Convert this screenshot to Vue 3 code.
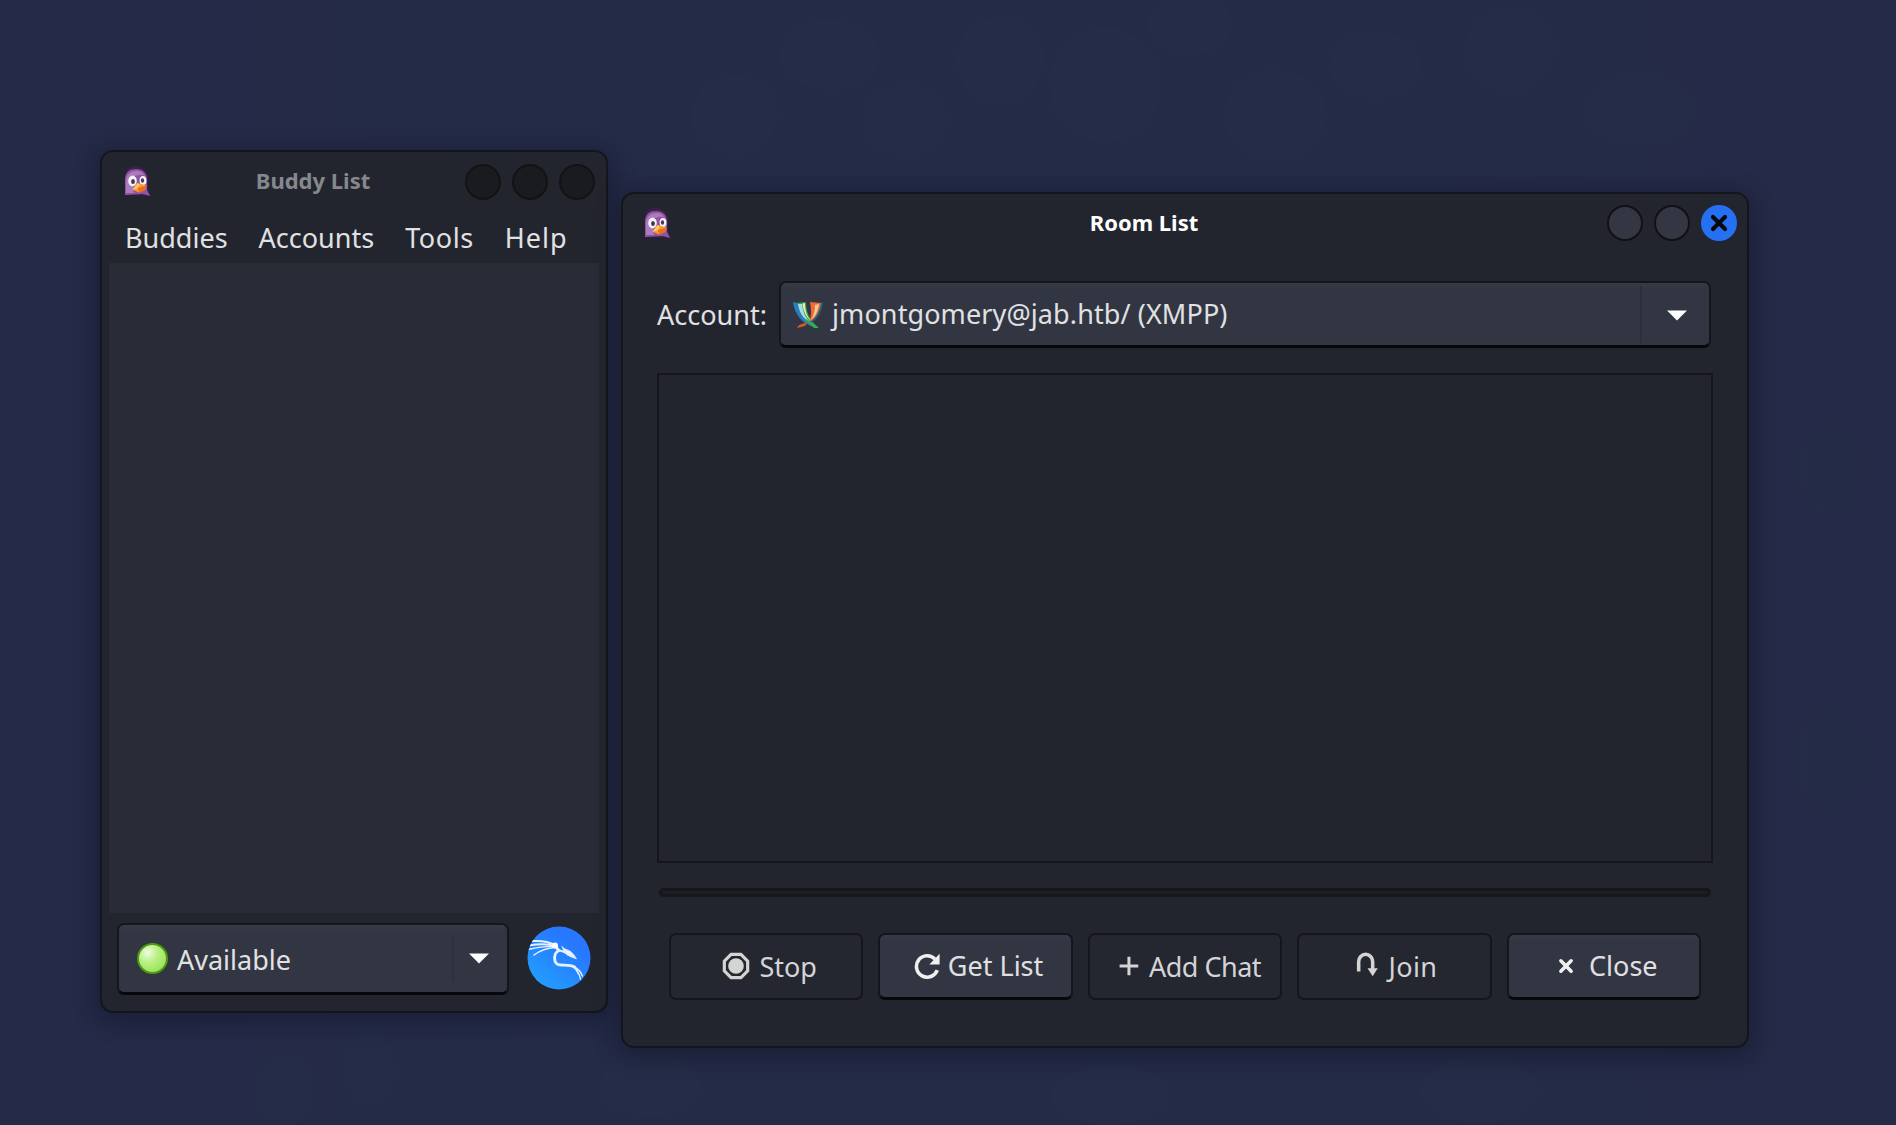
<template>
  <div class="desktop">
    <svg class="wallpaper" viewBox="0 0 1896 1125" aria-hidden="true">
      <ellipse
        v-for="(spot, index) in spots"
        :key="index"
        :cx="spot[0]"
        :cy="spot[1]"
        :rx="spot[2]"
        :ry="spot[3]"
      />
    </svg>

    <section class="window window--buddies">
      <header class="titlebar">
        <svg class="app-icon" viewBox="0 0 28 31">
          <use href="#pidgin" />
        </svg>
        <h1 class="title title--inactive">Buddy List</h1>
        <div class="controls">
          <span v-for="n in 3" :key="n" class="control control--inactive"></span>
        </div>
      </header>

      <nav class="menu">
        <span v-for="item in menu" :key="item">{{ item }}</span>
      </nav>

      <div class="buddies"></div>

      <footer class="status">
        <div class="combo combo--status">
          <span class="dot"></span>
          <span class="combo-text">{{ status }}</span>
          <span class="divider"></span>
          <svg class="arrow" viewBox="0 0 22 11"><path d="M0 0h22L11 11z" /></svg>
        </div>
        <svg class="avatar" viewBox="0 0 64 64">
          <defs>
            <linearGradient id="kali" x1="0.15" y1="0.95" x2="0.7" y2="0.25">
              <stop offset="0" stop-color="#229fff" />
              <stop offset="1" stop-color="#2777ff" />
            </linearGradient>
            <clipPath id="round"><circle cx="32" cy="32" r="31.5" /></clipPath>
          </defs>
          <circle cx="32" cy="32" r="31.5" fill="url(#kali)" />
          <g clip-path="url(#round)" fill="none" stroke="#e6f1ff" stroke-linecap="round">
            <path d="M5 15C14 14.500 22 15.500 28 19" stroke-width="2" />
            <path d="M1 19.500C11 18 21 17.500 28 20" stroke-width="2.200" />
            <path d="M1 23.500C10 21.500 20 20 28 20.500" stroke-width="1.400" />
            <path d="M7 29C13 24.500 20 22 28 21.500" stroke-width="1.500" />
            <path d="M28 20L32 24.500C26.500 27 26.500 35 30 38C34 40.500 42 37.500 47.500 41" stroke-width="2.800" />
            <path d="M45 39.500C50 42 54 46 55.500 50M46 40.500C50 44 52.500 48 53.500 53M45 40C48 42 50 45 51.500 48" stroke-width="1.400" />
            <path d="M31 24.500C36 24.500 38 26 41 28.500" stroke-width="2" />
            <path d="M35 20.500C37 23 40 23.500 43 25C46 27 48 30 49.500 33C46 31.500 43 31 40 28.500C38 26.500 36 24.500 35 20.500z" fill="#e6f1ff" stroke-width="0.600" />
          </g>
          <circle cx="28" cy="19.500" r="3" fill="#fff" />
        </svg>
      </footer>
    </section>

    <section class="window window--rooms">
      <header class="titlebar">
        <svg class="app-icon" viewBox="0 0 28 31">
          <g id="pidgin">
            <path d="M2 29V12C2 1 8 0 12 0C20 0 25 5 25 12V23L28 30z" fill="#3d1f47" />
            <path d="M2 29V14C2 6 7 3 13 3C20 3 24 7 24 14V24L27 30L20 28z" fill="#8d55a3" />
            <path d="M3 27V14C4 8 8 5 13 5C18 5 20 7 21 9C14 8 10 10 9 15L11 27z" fill="#ad7abf" />
            <ellipse cx="9.500" cy="15" rx="4.300" ry="5.400" fill="#f6f1f8" />
            <ellipse cx="20" cy="14.500" rx="3.400" ry="4.600" fill="#f6f1f8" />
            <ellipse cx="10" cy="15.500" rx="1.900" ry="2.500" fill="#43384f" />
            <ellipse cx="19.500" cy="14.500" rx="1.600" ry="2.200" fill="#43384f" />
            <path d="M14.500 17L23.500 19.500L22 24L16 26.500L9.500 23.500z" fill="#ff9c25" />
            <path d="M14.500 22L23.500 19.500L22 24L16.500 26.500z" fill="#e8701e" />
            <path d="M14.500 17L17 18.500L14.500 22.500L9.500 23.500z" fill="#ffc862" />
          </g>
        </svg>
        <h1 class="title">Room List</h1>
        <div class="controls">
          <span class="control"></span>
          <span class="control"></span>
          <span class="control control--close">
            <svg viewBox="0 0 18 18"><path d="M3 3l12 12M15 3L3 15" /></svg>
          </span>
        </div>
      </header>

      <div class="rooms-body">
        <div class="account">
          <label>Account:</label>
          <div class="combo combo--account">
            <svg class="xmpp" viewBox="0 0 30 28">
              <path d="M0 2L8 4C8 14 13 22 25 27C13 27 2 17 0 2z" fill="#277fbd" />
              <path d="M3 3L13 2C13 12 17 21 25 27C13 23 7 15 6 5z" fill="#2f9d5f" />
              <path d="M5 4L9 4C10 13 13 19 18 23C9 18 6 11 5 4z" fill="#a9dce3" />
              <path d="M9.500 3.500L12 3C12 11 14 16 18 21C13 17 10 11 9.500 3.500z" fill="#e9ef9d" />
              <path d="M30 2L27 3C26 13 21 20 13 24C23 23 29 13 30 2z" fill="#1d6388" />
              <path d="M17 2L28 3C26 14 21 20 16 22C19 15 18 9 17 2z" fill="#ec6a34" />
              <path d="M22 5L26 4C25 12 22 17 18 20C21 15 22 10 22 5z" fill="#f4c98d" />
              <path d="M4 28C6 23 11 24 15 22L12 26z" fill="#d8562b" />
              <path d="M13 19L26 28L21 28L12 20z" fill="#35ad50" />
            </svg>
            <span class="combo-text">{{ account }}</span>
            <span class="divider"></span>
            <svg class="arrow" viewBox="0 0 22 11"><path d="M0 0h22L11 11z" /></svg>
          </div>
        </div>

        <div class="room-tree"></div>
        <div class="progress"></div>

        <div class="actions">
          <button
            v-for="action in actions"
            :key="action.label"
            :class="['action', `action--${action.icon}`, { 'action--disabled': action.disabled }]"
          >
            <svg class="action-icon" viewBox="0 0 30 30">
              <template v-if="action.icon === 'stop'">
                <path d="M9.700 2.500h10.600l7.200 7.200v10.600l-7.200 7.200H9.700l-7.200-7.200V9.700z" stroke-width="3.400" />
                <circle class="solid" cx="15" cy="15" r="8.400" />
              </template>
              <template v-else-if="action.icon === 'refresh'">
                <path d="M26 19.500A11.500 11.500 0 1 1 23.500 7.500" stroke-width="3.800" />
                <path class="solid" d="M28.500 2v11.500H17.500z" />
              </template>
              <path v-else-if="action.icon === 'add'" d="M16 5v20M6 15h20" stroke-width="3.200" />
              <template v-else-if="action.icon === 'join'">
                <path d="M5 21V10.500a7.500 8 0 0 1 15 0V19" stroke-width="3.800" />
                <path class="solid" d="M14.500 17.500h11L20 26z" />
              </template>
              <path v-else d="M9.500 9.500l11 11M20.500 9.500l-11 11" stroke-width="3.800" stroke-linecap="round" />
            </svg>
            <span>{{ action.label }}</span>
          </button>
        </div>
      </div>
    </section>
  </div>
</template>

<script setup>
import { ref } from 'vue'

const menu = ['Buddies', 'Accounts', 'Tools', 'Help']
const status = ref('Available')
const account = ref('jmontgomery@jab.htb/ (XMPP)')

const actions = [
  { label: 'Stop', icon: 'stop', disabled: true },
  { label: 'Get List', icon: 'refresh', disabled: false },
  { label: 'Add Chat', icon: 'add', disabled: true },
  { label: 'Join', icon: 'join', disabled: true },
  { label: 'Close', icon: 'close', disabled: false }
]

// cx, cy, rx, ry of the faint wallpaper shapes
const spots = [
  [735, 115, 44, 40],
  [830, 55, 50, 36],
  [905, 120, 42, 36],
  [1000, 60, 44, 44],
  [1105, 85, 56, 58],
  [1190, 25, 42, 30],
  [1275, 115, 52, 46],
  [1375, 65, 46, 34],
  [1510, 50, 46, 44],
  [1640, 110, 56, 38],
  [1830, 470, 34, 48],
  [1830, 760, 38, 52],
  [1480, 1090, 60, 34],
  [1110, 1095, 60, 30],
  [650, 1085, 50, 32],
  [285, 1090, 30, 36],
  [370, 1070, 26, 38]
]
</script>

<style>
body {
  overflow: hidden;
}
</style>

<style scoped>
.desktop {
  position: relative;
  width: 1896px;
  height: 1125px;
  overflow: hidden;
  background: linear-gradient(90deg, #242a47 0%, #242b47 30%, #242b47 75%, #242a47 100%);
  font-family: "Noto Sans", "Open Sans", sans-serif;
  font-size: 27px;
  color: #e0e1e3;
}

.desktop * {
  box-sizing: border-box;
}

.wallpaper {
  display: block;
  width: 100%;
  height: 100%;
  fill: rgba(36, 48, 73, 0.25);
}

.window {
  position: absolute;
  display: flex;
  flex-direction: column;
  background: #23252e;
  border: 2px solid #14161b;
  border-radius: 13px;
  box-shadow: 0 5px 22px 3px rgba(12, 15, 32, 0.42);
}

.window--buddies {
  left: 100px;
  top: 150px;
  width: 508px;
  height: 863px;
}

.window--rooms {
  left: 621px;
  top: 192px;
  width: 1128px;
  height: 856px;
}

.titlebar {
  display: flex;
  align-items: center;
  flex: none;
  height: 59px;
  padding: 0 11px 0 21px;
}

.window--rooms .titlebar {
  height: 58px;
  padding: 0 10px 0 20px;
}

.app-icon {
  flex: none;
  width: 28px;
  height: 31px;
  margin-right: 10px;
}

.title {
  flex: 1;
  margin: 0;
  padding-bottom: 3px;
  font-size: 22px;
  font-weight: 700;
  line-height: 30px;
  text-align: center;
  color: #ffffff;
}

.title--inactive {
  color: #85888c;
}

.controls {
  display: flex;
  gap: 11px;
}

.control {
  display: flex;
  align-items: center;
  justify-content: center;
  width: 36px;
  height: 36px;
  border: 2px solid #101115;
  border-radius: 50%;
  background: #343743;
}

.control--inactive {
  border-color: #121317;
  background: #1a1b1f;
}

.control--close {
  border: 0;
  background: #2670f4;
}

.control--close svg {
  width: 18px;
  height: 18px;
  fill: none;
  stroke: #06080d;
  stroke-width: 4.2;
  stroke-linecap: round;
}

.menu {
  display: flex;
  align-items: center;
  flex: none;
  gap: 31px;
  height: 52px;
  padding-left: 23px;
}

.menu span:nth-child(n + 3) {
  letter-spacing: 0.6px;
}

.menu span:last-child {
  letter-spacing: 1px;
}

.buddies {
  flex: 1;
  margin: 0 7px;
  background: #292b36;
}

.status {
  display: flex;
  align-items: flex-start;
  flex: none;
  height: 98px;
  padding: 10px 14px 0 15px;
}

.combo {
  display: flex;
  align-items: center;
  border: 2px solid #14161c;
  border-bottom: 3px solid #07080b;
  border-radius: 7px;
  background: linear-gradient(#373a47 0, #323542 6px, #323542 100%);
}

.combo--status {
  width: 392px;
  height: 72px;
  padding: 0 18px;
}

.dot {
  width: 31px;
  height: 31px;
  border: 2px solid #4c9a12;
  border-radius: 50%;
  background: radial-gradient(circle at 32% 28%, #effbe2 0, #b9f083 38%, #8bdc45 100%);
}

.combo-text {
  flex: 1;
  white-space: nowrap;
}

.combo--status .combo-text {
  padding-top: 1px;
  margin-left: 9px;
}

.combo--account .combo-text {
  padding-bottom: 1px;
  letter-spacing: 0.1px;
}

.divider {
  width: 2px;
  height: 46px;
  background: #2d303b;
}

.arrow {
  flex: none;
  width: 20px;
  height: 11px;
  margin-left: 15px;
  fill: #ffffff;
}

.avatar {
  width: 64px;
  height: 64px;
  margin: 3px 0 0 18px;
}

.rooms-body {
  display: flex;
  flex-direction: column;
  padding: 29px 34px 0;
}

.account {
  display: flex;
  align-items: center;
  gap: 12px;
}

.account label {
  width: 110px;
  padding-bottom: 1px;
  white-space: nowrap;
}

.combo--account {
  flex: 1;
  height: 67px;
  padding: 0 22px 0 12px;
  margin-right: 2px;
}

.combo--account .divider {
  height: 57px;
}

.combo--account .arrow {
  margin-top: 2px;
  margin-left: 25px;
}

.xmpp {
  width: 30px;
  height: 28px;
  margin-right: 9px;
}

.room-tree {
  height: 490px;
  margin-top: 25px;
  border: 2px solid #14161b;
  background: #22252d;
}

.progress {
  height: 9px;
  margin: 25px 2px 0;
  border: 3px solid #15171c;
  border-radius: 5px;
  background: #1b1e24;
}

.actions {
  display: grid;
  grid-template-columns: repeat(5, 1fr);
  gap: 15px;
  margin-top: 36px;
  padding: 0 12px;
}

.action {
  display: flex;
  align-items: center;
  justify-content: center;
  height: 67px;
  padding: 0 0 1px 5px;
  border: 2px solid #14161c;
  border-bottom: 3px solid #07080b;
  border-radius: 7px;
  background: linear-gradient(#373a47 0, #323542 6px, #323542 100%);
  font: inherit;
  color: #e0e0e2;
  white-space: nowrap;
}

.action--disabled {
  border-bottom: 2px solid #14161c;
  background: #242630;
  color: #d3d4d7;
}

.action--add {
  letter-spacing: -0.5px;
}

.action--stop {
  padding-left: 7px;
}

.action--join {
  padding-left: 2px;
  letter-spacing: 0.3px;
}

.action--close {
  padding-left: 2px;
}

.action-icon {
  flex: none;
  width: 28px;
  height: 28px;
  margin-right: 7px;
  fill: none;
  stroke: #f0f0ee;
}

.action--stop .action-icon,
.action--close .action-icon {
  margin-right: 9px;
}

.action-icon .solid {
  fill: #f0f0ee;
  stroke: none;
}

.action--disabled .action-icon {
  stroke: #d4d4d3;
}

.action--disabled .action-icon .solid {
  fill: #d4d4d3;
}
</style>
